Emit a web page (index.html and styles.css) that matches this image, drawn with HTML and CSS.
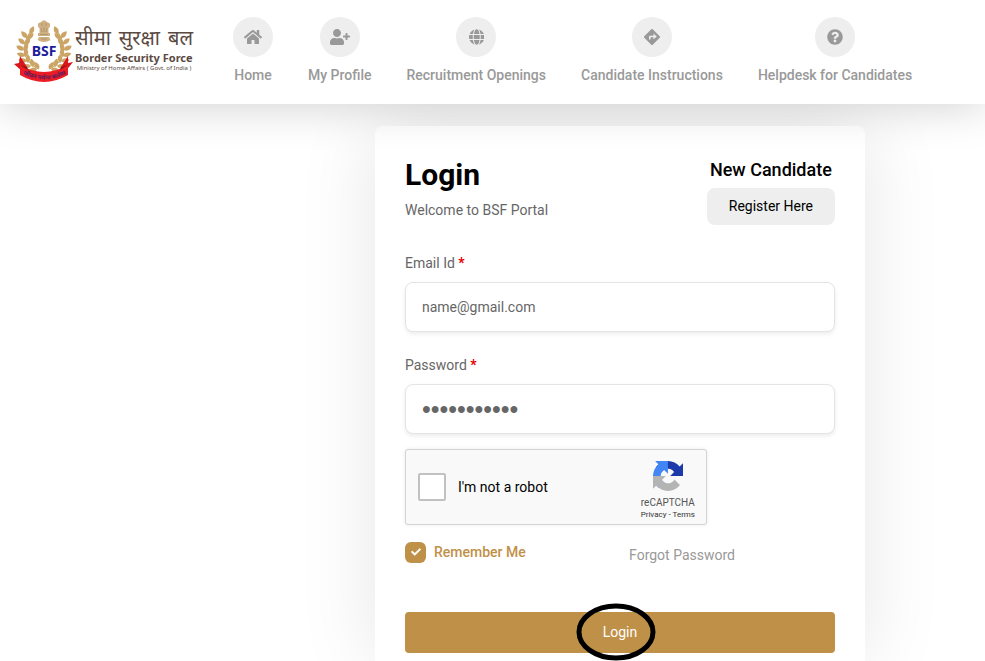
FILE: index.html
```html
<!DOCTYPE html>
<html lang="en">
<head>
<meta charset="utf-8">
<meta name="viewport" content="width=device-width, initial-scale=1">
<title>Login - BSF Portal</title>
<link rel="stylesheet" href="styles.css">
</head>
<body>
<header class="site-header">
  <a class="brand" href="#">
    <svg class="emblem" viewBox="0 0 60 64" aria-hidden="true">
      <defs>
        <path id="leaf" d="M0 0C-3.600-1.500-4-5.500-1.800-8.500C1.600-6 2.600-3 0 0Z"/>
        <g id="wreath" fill="#cba566">
          <path d="M17 12C8 23 6 42 25 50" fill="none" stroke="#cba566" stroke-width="1"/>
          <use href="#leaf" transform="translate(16 15) rotate(38)"/>
          <use href="#leaf" transform="translate(13 19) rotate(-28)"/>
          <use href="#leaf" transform="translate(13 20) rotate(62)"/>
          <use href="#leaf" transform="translate(11 25) rotate(-38)"/>
          <use href="#leaf" transform="translate(11 26) rotate(48)"/>
          <use href="#leaf" transform="translate(10 31) rotate(-50)"/>
          <use href="#leaf" transform="translate(10 32) rotate(38)"/>
          <use href="#leaf" transform="translate(11 37) rotate(-60)"/>
          <use href="#leaf" transform="translate(11 38) rotate(25)"/>
          <use href="#leaf" transform="translate(13 42) rotate(-70)"/>
          <use href="#leaf" transform="translate(14 44) rotate(12)"/>
          <use href="#leaf" transform="translate(17 47) rotate(-80)"/>
          <use href="#leaf" transform="translate(19 48) rotate(0)"/>
          <use href="#leaf" transform="translate(23 50) rotate(-90)"/>
          <use href="#leaf" transform="translate(25 50) rotate(-20)"/>
        </g>
      </defs>
      <use href="#wreath"/>
      <use href="#wreath" transform="translate(60 0) scale(-1 1)"/>
      <g fill="#cfb083">
        <path d="M27 3Q30-.500 33 3L36 4.500L36 8L34.500 9V14H25.500V9L24 8V4.500Z"/>
        <path d="M24 14h12v3H24zM25 18h10l1.500 3Q30 25 23.500 21Z"/>
      </g>
      <path d="M28 4v3M32 4v3M27 9l1 4M30 8v5M33 9l-1 4M26 15.500h8M27 20h6" stroke="#a68a60" stroke-width=".7" fill="none"/>
      <path d="M6 37L13 48L9 53L0 45L5 44ZM54 37L47 48L51 53L59 43L54 44Z" fill="#d9161c"/>
      <path d="M6 46Q30 60 54 46V56Q30 70 6 56Z" fill="#ec1c24"/>
      <path d="M6 46L13 48L14 51ZM54 46L47 48L46 51Z" fill="#8f1014"/>
      <path id="motto-line" d="M7 54Q30 67 54 54" fill="none"/>
      <text class="emblem-motto"><textPath href="#motto-line" startOffset="50%">जीवन पर्यन्त कर्तव्य</textPath></text>
      <text class="emblem-name" x="30" y="37">BSF</text>
    </svg>
    <span class="brand-text">
      <span class="brand-hindi" lang="hi"><span>सीमा</span> <span>सुरक्षा</span> <span>बल</span></span>
      <span class="brand-name">Border Security Force</span>
      <span class="brand-sub">Ministry of Home Affairs ( Govt. of India )</span>
    </span>
  </a>
  <nav class="main-nav">
    <a class="nav-item" href="#">
      <span class="nav-icon"><svg viewBox="0 0 576 512" aria-hidden="true"><path d="M280.370 148.260L96 300.110V464a16 16 0 0 0 16 16l112.060-.290a16 16 0 0 0 15.920-16V368a16 16 0 0 1 16-16h64a16 16 0 0 1 16 16v95.640a16 16 0 0 0 16 16.050L464 480a16 16 0 0 0 16-16V300L295.670 148.260a12.190 12.190 0 0 0-15.300 0zM571.600 251.470L488 182.560V44.050a12 12 0 0 0-12-12h-56a12 12 0 0 0-12 12v72.610L318.470 43a48 48 0 0 0-61 0L4.340 251.470a12 12 0 0 0-1.600 16.900l25.500 31A12 12 0 0 0 45.150 301l235.220-193.740a12.190 12.190 0 0 1 15.300 0L530.900 301a12 12 0 0 0 16.900-1.600l25.500-31a12 12 0 0 0-1.700-16.930z"/></svg></span>
      Home
    </a>
    <a class="nav-item" href="#">
      <span class="nav-icon"><svg viewBox="0 0 640 512" aria-hidden="true"><path d="M624 208h-64v-64c0-8.800-7.200-16-16-16h-32c-8.800 0-16 7.200-16 16v64h-64c-8.800 0-16 7.200-16 16v32c0 8.800 7.200 16 16 16h64v64c0 8.800 7.200 16 16 16h32c8.800 0 16-7.200 16-16v-64h64c8.800 0 16-7.200 16-16v-32c0-8.800-7.200-16-16-16zm-400 48c70.700 0 128-57.300 128-128S294.700 0 224 0 96 57.300 96 128s57.300 128 128 128zm89.600 32h-16.700c-22.200 10.200-46.900 16-72.900 16s-50.600-5.800-72.900-16h-16.700C60.200 288 0 348.200 0 422.400V464c0 26.500 21.500 48 48 48h352c26.500 0 48-21.500 48-48v-41.600c0-74.200-60.200-134.400-134.400-134.400z"/></svg></span>
      My Profile
    </a>
    <a class="nav-item" href="#">
      <span class="nav-icon"><svg viewBox="0 0 496 512" aria-hidden="true"><path d="M336.500 160C322 70.700 287.800 8 248 8s-74 62.700-88.500 152h177zM152 256c0 22.200 1.200 43.500 3.300 64h185.300c2.100-20.500 3.300-41.800 3.300-64s-1.200-43.500-3.300-64H155.300c-2.100 20.500-3.300 41.800-3.300 64zm324.700-96c-28.600-67.900-86.500-120.400-158-141.600 24.400 33.800 41.200 84.700 50 141.600h108zM177.200 18.400C105.800 39.600 47.800 92.100 19.300 160h108c8.700-56.900 25.500-107.800 49.900-141.600zM487.400 192H372.700c2.100 21 3.300 42.500 3.300 64s-1.200 43-3.300 64h114.600c5.500-20.500 8.600-41.800 8.600-64s-3.100-43.500-8.500-64zM120 256c0-21.500 1.200-43 3.300-64H8.600C3.200 212.500 0 233.800 0 256s3.200 43.500 8.600 64h114.600c-2-21-3.200-42.500-3.200-64zm39.500 96c14.500 89.300 48.700 152 88.500 152s74-62.700 88.500-152h-177zm159.300 141.600c71.400-21.200 129.400-73.700 158-141.600h-108c-8.800 56.900-25.600 107.800-50 141.600zM19.300 352c28.600 67.900 86.500 120.400 158 141.600-24.400-33.800-41.200-84.700-50-141.600h-108z"/></svg></span>
      Recruitment Openings
    </a>
    <a class="nav-item" href="#">
      <span class="nav-icon"><svg viewBox="0 0 512 512" aria-hidden="true"><path d="M502.610 233.320L278.680 9.390c-12.520-12.520-32.830-12.520-45.360 0L9.390 233.320c-12.520 12.530-12.520 32.830 0 45.360l223.930 223.930c12.520 12.530 32.830 12.530 45.360 0l223.930-223.930c12.520-12.530 12.520-32.830 0-45.360zm-100.980 12.560l-84.210 77.730c-5.120 4.730-13.430 1.100-13.430-5.880V264h-96v64c0 4.420-3.580 8-8 8h-32c-4.420 0-8-3.580-8-8v-80c0-17.670 14.330-32 32-32h112v-53.730c0-6.970 8.300-10.610 13.430-5.880l84.210 77.730c3.430 3.170 3.430 8.590 0 11.760z"/></svg></span>
      Candidate Instructions
    </a>
    <a class="nav-item" href="#">
      <span class="nav-icon"><svg viewBox="0 0 512 512" aria-hidden="true"><path d="M504 256c0 136.997-111.043 248-248 248S8 392.997 8 256C8 119.083 119.043 8 256 8s248 111.083 248 248zM262.655 90c-54.497 0-89.255 22.957-116.549 63.758-3.536 5.286-2.353 12.415 2.715 16.258l34.699 26.310c5.205 3.947 12.621 3.008 16.665-2.122 17.864-22.658 30.113-35.797 57.303-35.797 20.429 0 45.698 13.148 45.698 32.958 0 14.976-12.363 22.667-32.534 33.976C247.128 238.528 216 254.941 216 296v4c0 6.627 5.373 12 12 12h56c6.627 0 12-5.373 12-12v-1.333c0-28.462 83.186-29.647 83.186-106.667 0-58.002-60.165-102-116.531-102zM256 338c-25.365 0-46 20.635-46 46 0 25.364 20.635 46 46 46s46-20.636 46-46c0-25.364-20.635-46-46-46z"/></svg></span>
      Helpdesk for Candidates
    </a>
  </nav>
</header>

<main class="page">
  <form class="card">
    <div class="card-head">
      <div>
        <h1 class="title">Login</h1>
        <p class="subtitle">Welcome to BSF Portal</p>
      </div>
      <div class="register">
        <h2 class="register-title">New Candidate</h2>
        <button class="register-button" type="button">Register Here</button>
      </div>
    </div>

    <div class="field">
      <label class="field-label" for="email">Email Id <span class="required">*</span></label>
      <input class="field-input" id="email" type="email" value="name@gmail.com">
    </div>
    <div class="field">
      <label class="field-label" for="password">Password <span class="required">*</span></label>
      <input class="field-input field-input-password" id="password" type="password" value="bsfportal01">
    </div>

    <div class="captcha">
      <input class="captcha-box" id="robot" type="checkbox">
      <label class="captcha-label" for="robot">I'm not a robot</label>
      <div class="captcha-brand">
        <svg class="captcha-logo" viewBox="0 0 64 64" aria-hidden="true">
          <path fill="#1c3aa9" d="M64 31.955l-.033-1.370V4.687l-7.160 7.160C50.948 4.674 42.033.093 32.050.093c-10.400 0-19.622 4.960-25.458 12.640l11.736 11.860a15.550 15.550 0 0 1 4.754-5.334c2.050-1.600 4.952-2.906 8.968-2.906.485 0 .860.057 1.135.163 4.976.393 9.288 3.140 11.828 7.124l-8.307 8.307L64 31.953"/>
          <path fill="#4285f4" d="M31.862.094l-1.370.033H4.594l7.160 7.160C4.580 13.147 0 22.060 0 32.046c0 10.400 4.960 19.622 12.640 25.458L24.500 45.768a15.550 15.550 0 0 1-5.334-4.754c-1.600-2.050-2.906-4.952-2.906-8.968 0-.485.057-.860.163-1.135.393-4.976 3.140-9.288 7.124-11.828l8.307 8.307L31.860.095"/>
          <path fill="#b4b4b4" d="M.001 32.045l.033 1.370v25.898l7.160-7.160c5.860 7.173 14.774 11.754 24.760 11.754 10.400 0 19.622-4.960 25.458-12.640l-11.736-11.860a15.550 15.550 0 0 1-4.754 5.334c-2.050 1.600-4.952 2.906-8.968 2.906-.485 0-.860-.057-1.135-.163-4.976-.393-9.288-3.140-11.828-7.124l8.307-8.307c-10.522.040-22.400.066-27.295-.005"/>
        </svg>
        <span class="captcha-name">reCAPTCHA</span>
        <span class="captcha-links"><a href="#">Privacy</a> - <a href="#">Terms</a></span>
      </div>
    </div>

    <div class="options">
      <label class="remember" for="remember">
        <span class="remember-tick">
          <input class="remember-input" id="remember" type="checkbox" checked>
          <svg class="remember-check" viewBox="0 0 512 512" aria-hidden="true"><path d="M173.898 439.404l-166.400-166.400c-9.997-9.997-9.997-26.206 0-36.204l36.203-36.204c9.997-9.998 26.207-9.998 36.204 0L192 312.690 432.095 72.596c9.997-9.997 26.207-9.997 36.204 0l36.203 36.204c9.997 9.997 9.997 26.206 0 36.204l-294.400 294.401c-9.998 9.997-26.207 9.997-36.204-.001z"/></svg>
        </span>
        Remember Me
      </label>
      <a class="forgot" href="#">Forgot Password</a>
    </div>

    <button class="submit" type="submit">Login
      <svg class="submit-ring" viewBox="0 0 80 58" aria-hidden="true"><ellipse cx="40" cy="29" rx="37" ry="26"/></svg>
    </button>
  </form>
</main>
</body>
</html>
```
FILE: styles.css
```css
* {
  box-sizing: border-box;
}

body {
  margin: 0;
  background: #fff;
  color: #000;
  font: 14px/20px Roboto, "Noto Sans", sans-serif;
}

a {
  color: inherit;
  text-decoration: none;
}

h1, h2, p {
  margin: 0;
}

button, input {
  font: inherit;
  margin: 0;
}

/* Header */

.site-header {
  position: relative;
  z-index: 1;
  display: flex;
  align-items: flex-start;
  gap: 40px;
  padding: 17px 14px 18px;
  background: #fff;
  box-shadow: 0 0 48px rgba(0, 0, 0, 0.2);
}

.brand {
  display: flex;
  gap: 1px;
  padding-top: 2px;
  color: #5b4a42;
}

.emblem {
  width: 60px;
  height: 64px;
  overflow: visible;
}

.emblem-name {
  fill: #1c1c9c;
  font: bold 14px "Noto Sans", sans-serif;
  text-anchor: middle;
}

.emblem-motto {
  fill: #5a1c60;
  font: bold 6px "Noto Sans", sans-serif;
  text-anchor: middle;
}

.brand-text {
  display: flex;
  flex-direction: column;
  width: 118px;
  padding-top: 6px;
  font-family: "Noto Sans", sans-serif;
  white-space: nowrap;
}

.brand-hindi {
  display: flex;
  justify-content: space-between;
  font-size: 20px;
  line-height: 26px;
}

.brand-name {
  font-size: 11px;
  font-weight: 700;
  line-height: 13px;
}

.brand-sub {
  font-size: 6px;
  line-height: 8px;
  text-align: center;
}

.main-nav {
  display: flex;
  gap: 35px;
}

.nav-item {
  display: flex;
  flex-direction: column;
  align-items: center;
  gap: 8px;
  color: #999;
  font-weight: 500;
  line-height: 21px;
  white-space: nowrap;
}

.nav-icon {
  display: flex;
  align-items: center;
  justify-content: center;
  width: 40px;
  height: 40px;
  border-radius: 50%;
  background: #eee;
}

.nav-icon svg {
  height: 16px;
  fill: #999;
}

/* Login card */

.page {
  padding: 22px 120px 0 375px;
}

.card {
  padding: 30px 30px 8px;
  border-radius: 8px 8px 0 0;
  background: #fff;
  box-shadow: 0 0 80px rgba(0, 0, 0, 0.1);
}

.card-head {
  display: flex;
  justify-content: space-between;
  margin-bottom: 28px;
}

.title {
  font-size: 30px;
  font-weight: 700;
  line-height: 38px;
}

.subtitle {
  padding-top: 6px;
  color: #666;
}

.register {
  display: flex;
  flex-direction: column;
  align-items: center;
  gap: 6px;
}

.register-title {
  padding-top: 2px;
  font-size: 18px;
  font-weight: 500;
  line-height: 24px;
}

.register-button {
  padding: 8px 22px;
  border: 0;
  border-radius: 8px;
  background: #eee;
  color: #000;
  line-height: 21px;
}

.field {
  display: flex;
  flex-direction: column;
  gap: 8px;
  margin-bottom: 23px;
}

.field + .captcha {
  margin-top: -8px;
}

.field-label {
  color: #666;
  line-height: 21px;
}

.required {
  color: #e60000;
  font-weight: 700;
}

.field-input {
  width: 100%;
  height: 50px;
  padding: 0 16px;
  border: 1px solid #e4e4e4;
  border-radius: 8px;
  background: #fff;
  box-shadow: 0 2px 4px rgba(0, 0, 0, 0.08);
  color: #666;
}

.field-input-password {
  font-family: "Liberation Sans", Arial, sans-serif;
  font-size: 25px;
}

.captcha {
  display: flex;
  align-items: center;
  width: 302px;
  height: 76px;
  padding: 0 11px 0 12px;
  border: 1px solid #d3d3d3;
  border-radius: 3px;
  background: #f9f9f9;
  box-shadow: 0 0 4px rgba(0, 0, 0, 0.08);
}

.captcha-box {
  appearance: none;
  width: 28px;
  height: 28px;
  border: 2px solid #c1c1c1;
  border-radius: 2px;
  background: #fff;
}

.captcha-label {
  flex: 1;
  padding-left: 12px;
}

.captcha-brand {
  display: flex;
  flex-direction: column;
  align-items: center;
  padding-top: 8px;
  color: #555;
}

.captcha-logo {
  width: 30px;
  height: 30px;
  margin-bottom: 6px;
}

.captcha-name {
  font-size: 10px;
  line-height: 12px;
}

.captcha-links {
  color: #333;
  font-size: 8px;
  line-height: 12px;
}

.options {
  display: flex;
  justify-content: space-between;
  padding: 16px 100px 0 0;
  margin-bottom: 47px;
}

.remember {
  display: flex;
  align-items: center;
  gap: 8px;
  height: 22px;
  color: #bf9047;
  font-weight: 500;
}

.remember-tick {
  display: grid;
  place-items: center;
}

.remember-tick > * {
  grid-area: 1 / 1;
}

.remember-input {
  appearance: none;
  width: 21px;
  height: 21px;
  border-radius: 6px;
  background: #bf9047;
}

.remember-check {
  width: 10px;
  height: 10px;
  fill: #fff;
  pointer-events: none;
}

.forgot {
  padding-top: 4px;
  color: #999;
}

.submit {
  position: relative;
  display: block;
  width: 100%;
  height: 41px;
  padding: 0 0 2px;
  border: 0;
  border-radius: 4px;
  background: #bf9047;
  color: #fff;
}

/* Marker ring around the button text */
.submit-ring {
  position: absolute;
  top: -9px;
  left: calc(50% - 44px);
  width: 80px;
  height: 58px;
  fill: none;
  stroke: #000;
  stroke-width: 5px;
}
```
